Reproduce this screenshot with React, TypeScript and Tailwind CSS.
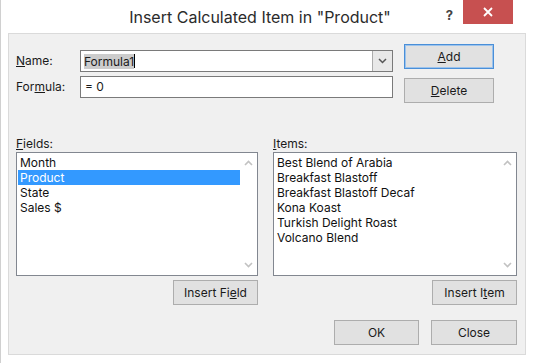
import { ReactNode } from "react"

const font = { fontFamily: "Inter, 'Noto Sans', sans-serif" }

function Btn({ children, primary, className = "" }: { children: ReactNode; primary?: boolean; className?: string }) {
  return (
    <div
      className={`flex h-[25px] items-center justify-center border bg-[#e1e1e1] text-[12px] text-[#1a1a1a] ${
        primary ? "border-[#4a8fd8] shadow-[inset_0_0_0_1px_#9cc3ec]" : "border-[#adadad]"
      } ${className}`}
    >
      {children}
    </div>
  )
}

function Chevron({ up }: { up?: boolean }) {
  return (
    <svg width="9" height="6" viewBox="0 0 9 6" className="text-[#c2c2c2]">
      <path d={up ? "M1 5 L4.5 1.5 L8 5" : "M1 1 L4.5 4.5 L8 1"} fill="none" stroke="currentColor" strokeWidth="1.6" />
    </svg>
  )
}

function ListBox({ items, selected }: { items: string[]; selected?: string }) {
  return (
    <div className="flex h-[124px] border border-[#828790] bg-white">
      <div className="flex-1 pt-[2px] pl-[1px]">
        {items.map((it) => (
          <div
            key={it}
            className={`h-[15px] pl-[2px] text-[12px] leading-[15px] ${
              it === selected ? "bg-[#3399ff] text-white" : "text-[#111]"
            }`}
          >
            {it}
          </div>
        ))}
      </div>
      <div className="flex w-[17px] flex-col items-center justify-between py-[7px]">
        <Chevron up />
        <Chevron />
      </div>
    </div>
  )
}

export default function App() {
  return (
    <div className="flex h-[363px] w-[533px] flex-col border-l border-[#d0d0d0] bg-white" style={font}>
      {/* Barra de título */}
      <div className="relative flex h-[33px] items-center justify-center">
        <span className="mr-[14px] text-[16px] text-[#2b2b2b]">Insert Calculated Item in "Product"</span>
        <div className="absolute top-0 right-[20px] flex items-start">
          <span className="mt-[6px] mr-[10px] text-[13px] font-bold text-[#444]">?</span>
          <div className="flex h-[24px] w-[50px] items-center justify-center bg-[#c75050]">
            <svg width="10" height="10" viewBox="0 0 10 10">
              <path d="M1 1 L9 9 M9 1 L1 9" stroke="white" strokeWidth="1.8" />
            </svg>
          </div>
        </div>
      </div>

      {/* Área de cliente */}
      <div className="mx-[7px] flex h-[322px] flex-col border border-[#dadada] bg-[#f0f0f0] pr-[8px] pl-[7px]">
        <div className="flex">
          <div className="flex flex-col gap-[4px] pt-[16px]">
            <div className="flex items-center">
              <span className="w-[64px] text-[12px] text-[#1a1a1a]">
                <u>N</u>ame:
              </span>
              <div className="flex h-[22px] w-[313px] items-center border border-[#7a7a7a] bg-white">
                <div className="flex flex-1 items-center pl-[3px]">
                  <span className="bg-[#cccccc] text-[12px] leading-[15px] text-[#1a1a1a]">Formula1</span>
                  <span className="h-[14px] w-px bg-black" />
                </div>
                <div className="flex h-full w-[20px] items-center justify-center border-l border-[#acacac] bg-[#e8e8e8]">
                  <svg width="9" height="6" viewBox="0 0 9 6">
                    <path d="M1 1 L4.5 4.5 L8 1" fill="none" stroke="#555" strokeWidth="1.5" />
                  </svg>
                </div>
              </div>
            </div>
            <div className="flex items-center">
              <span className="w-[64px] text-[12px] text-[#1a1a1a]">
                For<u>m</u>ula:
              </span>
              <div className="flex h-[22px] w-[313px] items-center border border-[#7a7a7a] bg-white pl-[4px] text-[12px] text-[#1a1a1a]">
                = 0
              </div>
            </div>
          </div>
          <div className="ml-[11px] flex flex-col gap-[9px] pt-[10px]">
            <Btn primary className="w-[90px]">
              <u>A</u>dd
            </Btn>
            <Btn className="w-[90px]">
              <u>D</u>elete
            </Btn>
          </div>
        </div>

        <div className="mt-[32px] flex gap-[15px]">
          <div className="flex w-[242px] flex-col">
            <span className="h-[17px] text-[12px] text-[#1a1a1a]">
              <u>F</u>ields:
            </span>
            <ListBox items={["Month", "Product", "State", "Sales $"]} selected="Product" />
            <div className="mt-[4px] flex justify-end">
              <Btn className="w-[85px]">
                Insert Fi<u>e</u>ld
              </Btn>
            </div>
          </div>
          <div className="flex w-[244px] flex-col">
            <span className="h-[17px] text-[12px] text-[#1a1a1a]">
              <u>I</u>tems:
            </span>
            <ListBox
              items={[
                "Best Blend of Arabia",
                "Breakfast Blastoff",
                "Breakfast Blastoff Decaf",
                "Kona Koast",
                "Turkish Delight Roast",
                "Volcano Blend",
              ]}
            />
            <div className="mt-[4px] flex justify-end">
              <Btn className="w-[85px]">
                Insert I<u>t</u>em
              </Btn>
            </div>
          </div>
        </div>

        <div className="mt-[15px] flex justify-end gap-[12px]">
          <Btn className="w-[85px]">OK</Btn>
          <Btn className="w-[86px]">Close</Btn>
        </div>
      </div>
    </div>
  )
}
